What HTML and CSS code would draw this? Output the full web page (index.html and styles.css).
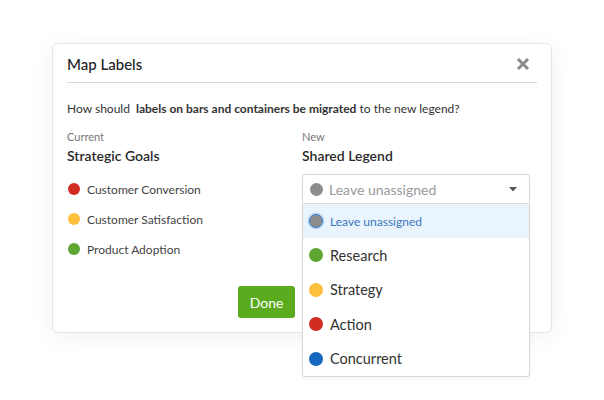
FILE: index.html
```html
<!DOCTYPE html>
<html>
<head>
<meta charset="utf-8">
<link rel="stylesheet" href="styles.css">
</head>
<body>
<div class="card">
  <div class="header">
    <div class="title">Map Labels</div>
    <svg class="close" width="14" height="14" viewBox="0 0 14 14"><path d="M2 2 L12 12 M12 2 L2 12" stroke="#8a8a8a" stroke-width="3" stroke-linecap="butt"/></svg>
  </div>
  <div class="question">How should <b>labels on bars and containers be migrated</b> to the new legend?</div>
  <div class="grid">
    <div class="col">
      <div class="sub">Current</div>
      <div class="head">Strategic Goals</div>
      <div class="row"><span class="dot red"></span>Customer Conversion</div>
      <div class="row"><span class="dot yellow"></span>Customer Satisfaction</div>
      <div class="row"><span class="dot green"></span>Product Adoption</div>
    </div>
    <div class="col">
      <div class="sub">New</div>
      <div class="head">Shared Legend</div>
      <div class="selectwrap">
        <div class="select"><span class="dot gray"></span><span class="placeholder">Leave unassigned</span><svg class="caret" width="8" height="5" viewBox="0 0 8 5"><path d="M0 0 H8 L4 4.5 Z" fill="#555"/></svg></div>
        <div class="menu">
          <div class="item active"><span class="dot gray ring"></span>Leave unassigned</div>
          <div class="item"><span class="dot green"></span>Research</div>
          <div class="item"><span class="dot yellow"></span>Strategy</div>
          <div class="item"><span class="dot red"></span>Action</div>
          <div class="item"><span class="dot blue"></span>Concurrent</div>
        </div>
      </div>
    </div>
  </div>
  <div class="footer"><button class="done">Done</button></div>
</div>
</body>
</html>
```

FILE: styles.css
```css
html, body { margin: 0; padding: 0; background: #fff; }
body {
  font-family: Lato, "Noto Sans", sans-serif;
  color: #2b2b2b;
  padding: 43px 0 0 52px;
  width: 604px; height: 400px; box-sizing: border-box; overflow: hidden;
}
.card {
  width: 500px; height: 290px; box-sizing: border-box;
  border: 1px solid #e6e6e6; border-radius: 6px; background: #fff;
  box-shadow: 0 4px 24px rgba(0,0,0,0.06);
  padding: 0 14px 0 14px;
  display: flex; flex-direction: column;
}
.header {
  display: flex; align-items: center; justify-content: space-between;
  height: 38px; border-bottom: 1px solid #d8d8d8;
}
.title { font-size: 15px; font-weight: 500; color: #222; padding-top: 2px; }
.close { margin-right: 7px; margin-top: 2px; }
.question { font-size: 12px; margin-top: 19px; line-height: 14px; color: #333; }
.question b { font-weight: 700; margin-left: 3px; }
.grid { display: grid; grid-template-columns: 235px 228px; margin-top: 14px; }
.sub { font-size: 11px; color: #777; line-height: 14px; }
.head { font-size: 14px; font-weight: 600; color: #2a2a2a; margin-top: 4px; line-height: 16px; }
.col:first-child .head { margin-bottom: 10px; }
.row { display: flex; align-items: center; height: 30px; font-size: 12px; color: #444; }
.row .dot { margin: 0 7px 0 1px; }
.dot { display: inline-block; width: 12px; height: 12px; border-radius: 50%; flex: none; }
.red { background: #d12c22; }
.yellow { background: #fdc03c; }
.green { background: #5ea531; }
.blue { background: #1667be; }
.gray { background: #8c8c8c; }
.selectwrap { position: relative; margin-top: 10px; }
.select {
  height: 30px; box-sizing: border-box; border: 1px solid #d8d8d8; border-radius: 3px;
  display: flex; align-items: center; padding: 0 12px 0 7px; font-size: 14px; color: #9a9a9a;
}
.select .dot { width: 13px; height: 13px; margin-right: 6px; }
.placeholder { flex: 1; }
.menu {
  position: absolute; left: 0; top: 30px; width: 228px; box-sizing: border-box;
  border: 1px solid #d8d8d8; border-top: none; border-radius: 0 0 3px 3px; background: #fff;
  box-shadow: 0 2px 4px rgba(0,0,0,0.04);
}
.item { display: flex; align-items: center; height: 34.5px; padding: 0 6px; font-size: 14.5px; color: #333; }
.item .dot { width: 14px; height: 14px; margin-right: 7px; }
.item.active { background: #eaf4fd; color: #3a76bd; font-size: 12px; height: 34px; }
.ring { box-sizing: border-box; border: 1.5px solid #3b7dcc; box-shadow: 0 0 0 1.5px #bcd8f5; }
.footer { margin-top: auto; margin-bottom: 14px; display: flex; padding-left: 171px; }
.done {
  width: 57px; height: 32px; border: none; border-radius: 3px; background: #5aab1e;
  color: #fff; font-family: inherit; font-size: 14px; padding: 0;
}
```
